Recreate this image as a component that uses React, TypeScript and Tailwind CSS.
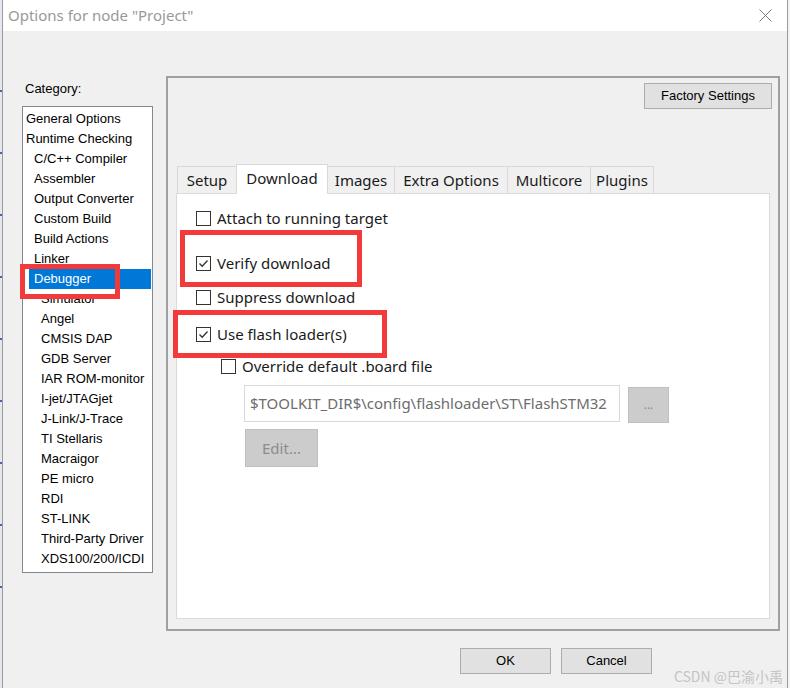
import React from 'react';

const ITEMS: [string, number][] = [
  ['General Options', 0],
  ['Runtime Checking', 0],
  ['C/C++ Compiler', 1],
  ['Assembler', 1],
  ['Output Converter', 1],
  ['Custom Build', 1],
  ['Build Actions', 1],
  ['Linker', 1],
  ['Debugger', 1],
  ['Simulator', 2],
  ['Angel', 2],
  ['CMSIS DAP', 2],
  ['GDB Server', 2],
  ['IAR ROM-monitor', 2],
  ['I-jet/JTAGjet', 2],
  ['J-Link/J-Trace', 2],
  ['TI Stellaris', 2],
  ['Macraigor', 2],
  ['PE micro', 2],
  ['RDI', 2],
  ['ST-LINK', 2],
  ['Third-Party Driver', 2],
  ['XDS100/200/ICDI', 2],
];

const TABS = [
  { label: 'Setup', w: 'w-[60px]' },
  { label: 'Download', w: 'w-[92px]', active: true },
  { label: 'Images', w: 'w-[68px]' },
  { label: 'Extra Options', w: 'w-[114px]' },
  { label: 'Multicore', w: 'w-[84px]' },
  { label: 'Plugins', w: 'w-[64px]' },
];

const noto = { fontFamily: '"Noto Sans", "Noto Sans CJK SC", sans-serif' };
const lib = { fontFamily: '"Liberation Sans", Arial, sans-serif' };

function Check({ checked }: { checked?: boolean }) {
  return (
    <span className="w-[15px] h-[15px] border border-[#333333] bg-white flex items-center justify-center shrink-0">
      {checked && (
        <svg width="13" height="13" viewBox="0 0 13 13">
          <polyline points="2.5,6.5 5.2,9.3 10.5,3.5" fill="none" stroke="#333" strokeWidth="1.3" />
        </svg>
      )}
    </span>
  );
}

function Row({ label, checked, cls }: { label: string; checked?: boolean; cls: string }) {
  return (
    <div className={`flex items-center gap-[6px] h-[20px] ${cls}`}>
      <Check checked={checked} />
      <span className="text-[15px] leading-[20px] text-[#1a1a1a]" style={noto}>
        {label}
      </span>
    </div>
  );
}

export default function App() {
  return (
    <div className="w-[790px] h-[688px] relative overflow-hidden flex bg-white">
      {/* bit of the window behind */}
      <div className="w-[2px] h-full bg-[#e6e8f0] flex flex-col gap-[60px] pt-[90px]">
        {Array.from({ length: 9 }).map((_, i) => (
          <div key={i} className="h-[2px] w-[2px] bg-[#5060b8]" />
        ))}
      </div>

      <div className="w-[786px] h-full border-l border-r border-[#9a9a9a] flex flex-col">
        {/* title bar */}
        <div className="h-[31px] bg-white flex items-center justify-between pl-[5px] pr-[15px]">
          <span className="text-[15px] text-[#999999]" style={noto}>
            Options for node "Project"
          </span>
          <svg width="13" height="13" viewBox="0 0 13 13">
            <path d="M0.5 0.5 L12.5 12.5 M12.5 0.5 L0.5 12.5" stroke="#777" strokeWidth="1" />
          </svg>
        </div>

        {/* body */}
        <div className="flex-1 bg-[#f0f0f0] flex pl-[19px] pt-[45px]">
          <div className="w-[131px] flex flex-col">
            <div className="pt-[5px] pl-[3px] text-[13px] leading-[16px] text-black" style={lib}>
              Category:
            </div>
            <div className="mt-[9px] h-[467px] bg-white border border-[#828790] pt-[2px]" style={lib}>
              {ITEMS.map(([name, lvl]) => {
                const sel = name === 'Debugger';
                const pad = lvl === 0 ? 'pl-[3px]' : lvl === 1 ? 'pl-[11px]' : 'pl-[18px]';
                if (sel) {
                  return (
                    <div key={name} className="h-[20px] pl-[6px] pr-[1px]">
                      <div className="h-[20px] bg-[#0078d7] text-white text-[13px] leading-[20px] pl-[5px]">
                        {name}
                      </div>
                    </div>
                  );
                }
                return (
                  <div key={name} className={`h-[20px] text-[13px] leading-[20px] text-black whitespace-nowrap ${pad}`}>
                    {name}
                  </div>
                );
              })}
            </div>
          </div>

          <div className="ml-[13px] flex flex-col">
            <div className="w-[614px] h-[555px] border-2 border-[#a0a0a0] flex flex-col px-[8px] pb-[10px] pt-[5px]">
              <div className="flex justify-end">
                <button
                  className="w-[128px] h-[26px] bg-[#e1e1e1] border border-[#adadad] text-[13px] text-black -mr-[2px]"
                  style={lib}
                >
                  Factory Settings
                </button>
              </div>

              <div className="mt-[55px] flex items-end pl-[1px]">
                {TABS.map((t) => (
                  <div
                    key={t.label}
                    className={`${t.w} -mr-px flex items-center justify-center border border-b-0 border-[#d9d9d9] text-[15px] text-[#1a1a1a] ${
                      t.active ? 'h-[30px] bg-white relative z-10 -mb-px pb-[3px]' : 'h-[27px] bg-[#f0f0f0]'
                    }`}
                    style={noto}
                  >
                    {t.label}
                  </div>
                ))}
              </div>

              <div className="flex-1 bg-white border border-[#dadada] pl-[19px] pt-[14px] flex flex-col">
                <Row label="Attach to running target" cls="" />
                <Row label="Verify download" checked cls="mt-[25px]" />
                <Row label="Suppress download" cls="mt-[14px]" />
                <Row label="Use flash loader(s)" checked cls="mt-[17px]" />
                <Row label="Override default .board file" cls="mt-[12px] ml-[25px]" />
                <div className="mt-[9px] ml-[48px] flex items-start gap-[8px]">
                  <div
                    className="w-[376px] h-[37px] border border-[#d9d9d9] bg-white flex items-center pl-[5px] overflow-hidden whitespace-nowrap text-[15px] text-[#6d6d6d]"
                    style={noto}
                  >
                    {'$TOOLKIT_DIR$\\config\\flashloader\\ST\\FlashSTM32'}
                  </div>
                  <div
                    className="mt-[2px] w-[41px] h-[36px] bg-[#cccccc] border border-[#bfbfbf] flex items-center justify-center text-[12px] text-[#8c8c8c]"
                    style={noto}
                  >
                    ...
                  </div>
                </div>
                <div
                  className="mt-[6px] ml-[49px] w-[73px] h-[38px] bg-[#cccccc] border border-[#bfbfbf] flex items-center justify-center text-[15px] text-[#8c8c8c]"
                  style={noto}
                >
                  Edit...
                </div>
              </div>
            </div>

            <div className="mt-[17px] ml-[294px] flex gap-[10px]">
              <button className="w-[91px] h-[26px] bg-[#e1e1e1] border border-[#adadad] text-[13px] text-black" style={lib}>
                OK
              </button>
              <button className="w-[91px] h-[26px] bg-[#e1e1e1] border border-[#adadad] text-[13px] text-black" style={lib}>
                Cancel
              </button>
            </div>
          </div>
        </div>
      </div>

      <div className="w-[2px] h-full bg-[#f4f4f4]" />

      {/* annotation boxes drawn over the screenshot */}
      <div className="absolute left-[20px] top-[264px] w-[100px] h-[35px] border-[5px] border-[#f33a3a]" />
      <div className="absolute left-[180px] top-[230px] w-[182px] h-[57px] border-[5px] border-[#f33a3a]" />
      <div className="absolute left-[173px] top-[310px] w-[214px] h-[48px] border-[5px] border-[#f33a3a]" />

      <div
        className="absolute right-[7px] top-[667px] text-[14px] leading-[18px] text-[#c4c4c4]"
        style={{ fontFamily: '"Noto Sans CJK SC", "Noto Sans", sans-serif' }}
      >
        CSDN @巴渝小禹
      </div>
    </div>
  );
}
